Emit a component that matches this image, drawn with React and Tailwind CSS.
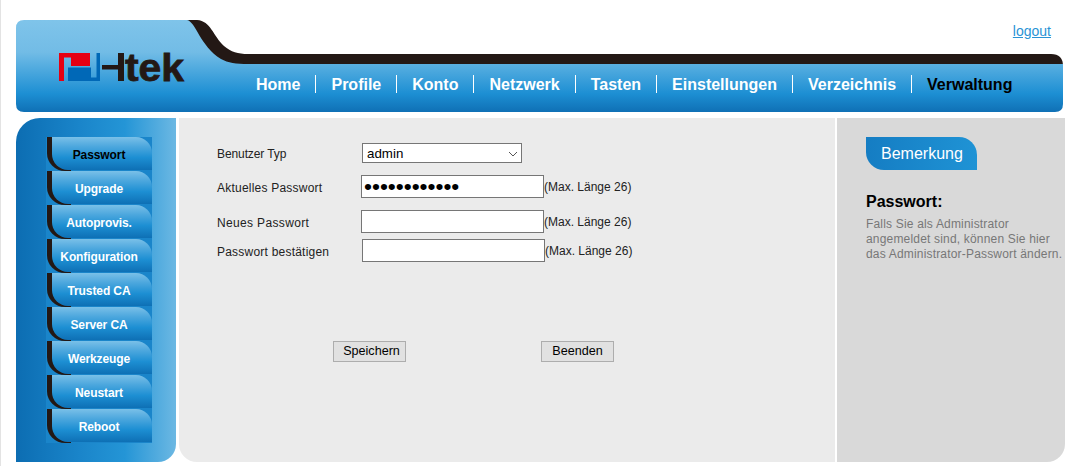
import React from 'react';

const menuItems = ['Home', 'Profile', 'Konto', 'Netzwerk', 'Tasten', 'Einstellungen', 'Verzeichnis', 'Verwaltung'];
const sideItems = ['Passwort', 'Upgrade', 'Autoprovis.', 'Konfiguration', 'Trusted CA', 'Server CA', 'Werkzeuge', 'Neustart', 'Reboot'];

const Logo = () => (
  <svg width="128" height="44" viewBox="59 46 128 44" className="block shrink-0">
    {/* red half */}
    <path d="M59 53H90V66H71V57.5H64V81H59Z" fill="#e60012" />
    {/* blue half */}
    <path d="M68 67.5H91V77.5H96.5V53H100V81H68Z" fill="#0068b7" />
    {/* cut down H */}
    <rect x="102" y="65" width="17" height="4.5" fill="#231815" />
    <rect x="118" y="53" width="6" height="28" fill="#231815" />
    <text x="125" y="81" textLength="59" lengthAdjust="spacingAndGlyphs" fontFamily="'Liberation Sans', Arial, sans-serif" fontWeight="700" fontSize="38" fill="#231815" stroke="#231815" strokeWidth="0.8">tek</text>
  </svg>
);

const HeaderShape = () => (
  <svg width="1047" height="92" viewBox="0 0 1047 92" className="absolute inset-0 block">
    <defs>
      <linearGradient id="headerBlue" gradientUnits="userSpaceOnUse" x1="0" y1="0" x2="0" y2="92">
        <stop offset="0" stopColor="#7fc4ea" />
        <stop offset="0.35" stopColor="#72bce6" />
        <stop offset="0.5" stopColor="#55ade0" />
        <stop offset="0.8" stopColor="#1d8fd3" />
        <stop offset="1" stopColor="#0f70b5" />
      </linearGradient>
    </defs>
    <path d="M171 0H181C195 1 197 16 208 26C215 32 222 34 232 34H1035Q1047 34 1047 46V50H171Z" fill="#231815" />
    <path d="M8 0H171C180 2 184 26 205 39C212 43 220 44 232 44H1047V84Q1047 92 1039 92H8Q0 92 0 84V8Q0 0 8 0Z" fill="url(#headerBlue)" />
  </svg>
);

const SideButton = ({ label, active }) => (
  <a className={`relative flex h-[34px] w-[106px] items-center justify-center bg-[#1a85ca] pt-[2px] text-xs font-bold tracking-[-0.1px] ${active ? 'text-black' : 'text-white'}`}>
    <span className="absolute bottom-0 left-[1px] top-0 w-[24px] rounded-bl-[18px] bg-[#231815]"></span>
    <span className="absolute bottom-[1px] left-[6px] right-0 top-0 rounded-bl-[16px] rounded-tr-[16px] bg-[linear-gradient(180deg,#7ac0e8_0%,#4ea8de_28%,#1d8fd3_62%,#0e70b5_100%)]"></span>
    <span className="relative">{label}</span>
  </a>
);

const FormRow = ({ label, labelClass, className, children, hint }) => (
  <div className={`flex items-center ${className}`}>
    <label className={`shrink-0 pt-[2px] text-xs text-[#222] ${labelClass}`}>{label}</label>
    {children}
    {hint && <span className="text-xs text-[#222]">(Max. Länge 26)</span>}
  </div>
);

const inputClass = 'h-[23px] w-[183px] border border-[#767676] bg-white px-[2px] text-black outline-none';

export default function App() {
  return (
    <div className="h-[466px] w-[1080px] overflow-hidden border-l border-[#e3e3e3] bg-white font-['Liberation_Sans',Arial,sans-serif]">
      {/* header */}
      <div className="relative ml-[15px] mt-[20px] h-[92px] w-[1047px]">
        <HeaderShape />
        <div className="relative flex h-[26px] justify-end pr-[12px] pt-[3px]">
          <a className="text-sm leading-[16px] text-[#2a93d5] underline">logout</a>
        </div>
        <div className="relative flex items-start pl-[43px]">
          <Logo />
          <nav className="ml-[54px] mt-[29px] flex">
            {menuItems.map((item, i) => (
              <a
                key={item}
                className={`flex h-[18px] items-center px-[15px] pt-[2px] text-base font-bold ${i < menuItems.length - 1 ? 'border-r border-white' : ''} ${item === 'Verwaltung' ? 'text-black' : 'text-white'}`}
              >
                {item}
              </a>
            ))}
          </nav>
        </div>
      </div>

      {/* body */}
      <div className="ml-[15px] mt-[6px] flex h-[344px]">
        <aside className="h-full w-[160px] rounded-br-[18px] rounded-tl-[24px] bg-[linear-gradient(90deg,#0c6db2_0%,#1a85ca_40%,#2495d6_68%,#6cb8e3_100%)] pl-[30px] pt-[19px]">
          {sideItems.map((item) => (
            <SideButton key={item} label={item} active={item === 'Passwort'} />
          ))}
        </aside>

        <main className="ml-[3px] h-full w-[656px] rounded-bl-[18px] bg-[#ebebeb] pl-[38px] pt-[25px]">
          <FormRow label="Benutzer Typ" labelClass="w-[145px] tracking-[-0.1px]">
            <div className="relative">
              <select defaultValue="admin" className="block h-[20px] w-[160px] appearance-none border border-[#767676] bg-white pl-[4px] text-[13.33px] text-black outline-none">
                <option value="admin">admin</option>
                <option value="user">user</option>
              </select>
              <svg width="10" height="6" viewBox="0 0 10 6" className="pointer-events-none absolute left-[146px] top-[8px]">
                <path d="M1 1L5 5L9 1" fill="none" stroke="#555" strokeWidth="1" />
              </svg>
            </div>
          </FormRow>
          <FormRow label="Aktuelles Passwort" labelClass="w-[144px] tracking-[0.22px]" className="mt-[12px]" hint>
            <input type="password" defaultValue="passwort1234" className={`${inputClass} text-[22.7px] leading-none`} />
          </FormRow>
          <FormRow label="Neues Passwort" labelClass="w-[144px] tracking-[0.35px]" className="mt-[12px]" hint>
            <input type="password" className={`${inputClass} text-[13.33px]`} />
          </FormRow>
          <FormRow label="Passwort bestätigen" labelClass="w-[145px] tracking-[0.22px]" className="mt-[6px]" hint>
            <input type="password" className={`${inputClass} text-[13.33px]`} />
          </FormRow>
          <div className="ml-[116px] mt-[79px] flex gap-[135px]">
            <button className="h-[21px] w-[73px] border border-[#adadad] bg-[#e1e1e1] pl-[4px] text-[12.6px] text-black">Speichern</button>
            <button className="h-[21px] w-[73px] border border-[#adadad] bg-[#e1e1e1] text-[12.6px] text-black">Beenden</button>
          </div>
        </main>

        <section className="ml-[2px] h-full w-[228px] rounded-br-[18px] bg-[#d9d9d9] pl-[29px] pt-[19px]">
          <div className="flex h-[33px] w-[111px] items-center rounded-bl-[18px] rounded-tr-[18px] bg-[linear-gradient(90deg,#157dc3,#1f93d5)] pl-[15px] text-base text-white">
            Bemerkung
          </div>
          <h3 className="mt-[23px] text-base font-bold leading-[18px] text-black">Passwort:</h3>
          <p className="mt-[6px] w-[199px] text-xs leading-[15px] tracking-[0.18px] text-[#777]">
            Falls Sie als Administrator angemeldet sind, können Sie hier das Administrator-Passwort ändern.
          </p>
        </section>
      </div>
    </div>
  );
}
